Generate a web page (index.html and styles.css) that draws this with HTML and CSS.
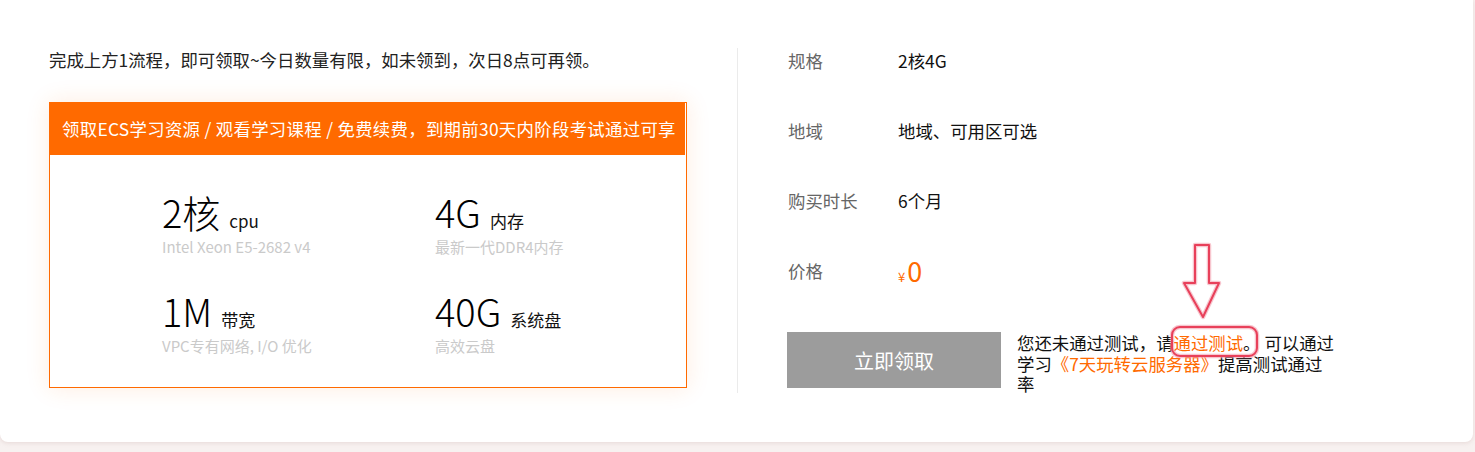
FILE: index.html
```html
<!DOCTYPE html>
<html lang="zh-CN">
<head>
<meta charset="utf-8">
<title>领取ECS</title>
<link rel="stylesheet" href="styles.css">
</head>
<body>
<div class="card">
  <div class="left">
    <p class="intro">完成上方1流程，即可领取~今日数量有限，如未领到，次日8点可再领。</p>
    <div class="box">
      <div class="box-head">领取ECS学习资源 / 观看学习课程 / 免费续费，到期前30天内阶段考试通过可享</div>
      <div class="specs">
        <div class="spec">
          <div class="spec-main"><span class="big">2核</span><span class="unit">cpu</span></div>
          <div class="spec-sub">Intel Xeon E5-2682 v4</div>
        </div>
        <div class="spec">
          <div class="spec-main"><span class="big">4G</span><span class="unit">内存</span></div>
          <div class="spec-sub">最新一代DDR4内存</div>
        </div>
        <div class="spec">
          <div class="spec-main"><span class="big">1M</span><span class="unit">带宽</span></div>
          <div class="spec-sub">VPC专有网络, I/O 优化</div>
        </div>
        <div class="spec">
          <div class="spec-main"><span class="big">40G</span><span class="unit">系统盘</span></div>
          <div class="spec-sub">高效云盘</div>
        </div>
      </div>
    </div>
  </div>
  <div class="right">
    <div class="row"><span class="label">规格</span><span class="value">2核4G</span></div>
    <div class="row"><span class="label">地域</span><span class="value">地域、可用区可选</span></div>
    <div class="row"><span class="label">购买时长</span><span class="value">6个月</span></div>
    <div class="row"><span class="label">价格</span><span class="value price"><span class="yen">¥</span><span class="num">0</span></span></div>
    <div class="action">
      <button class="btn" type="button">立即领取</button>
      <div class="msg">
        您还未通过测试，请<a class="link" href="#">通过测试</a>。 可以通过学习<a class="link" href="#">《7天玩转云服务器》</a>提高测试通过率
        <svg class="mark" width="120" height="125" viewBox="0 0 120 125" xmlns="http://www.w3.org/2000/svg">
          <g fill="none" stroke-linejoin="round" stroke-linecap="round">
            <g stroke="#f3a0ae" stroke-width="4.5" opacity="0.6">
              <path d="M38 7 L52 7 L52 45 L62 45 L46 79 L27 45 L38 45 Z" />
              <rect x="15" y="89" width="85" height="29" rx="8" ry="8" />
            </g>
            <g stroke="#e8405a" stroke-width="2">
              <path d="M38 7 L52 7 L52 45 L62 45 L46 79 L27 45 L38 45 Z" />
              <rect x="15" y="89" width="85" height="29" rx="8" ry="8" />
            </g>
          </g>
        </svg>
      </div>
    </div>
  </div>
</div>
</body>
</html>
```

FILE: styles.css
```css
* { box-sizing: border-box; }
html, body { margin: 0; padding: 0; }
body {
  background: #f7f1f0;
  font-family: "Microsoft YaHei", "Noto Sans CJK SC", "Noto Sans", sans-serif;
  color: #333;
  width: 1475px;
  height: 452px;
  overflow: hidden;
}
.card {
  width: 1473px;
  height: 442px;
  background: #fff;
  border-radius: 0 0 8px 8px;
  box-shadow: 0 1px 4px rgba(200, 170, 165, 0.35);
  display: flex;
  padding-top: 48px;
}
.left {
  width: 737px;
  padding-left: 49px;
}
.intro {
  margin: 0;
  font-size: 17.4px;
  line-height: 24px;
  color: #222;
}
.box {
  margin-top: 30px;
  width: 638px;
  height: 286px;
  border: 1px solid #ff6a00;
  box-shadow: 0 0 22px rgba(255, 120, 30, 0.14);
  background: #fff;
}
.box-head {
  height: 53px;
  margin-top: -1px;
  margin-right: 1px;
  margin-left: -1px;
  background: #ff6a00;
  color: #fff;
  font-size: 17.4px;
  letter-spacing: 0.3px;
  line-height: 53px;
  padding-left: 13px;
  white-space: nowrap;
}
.specs {
  display: grid;
  grid-template-columns: 273px 200px;
  padding-left: 112px;
  padding-top: 37px;
  row-gap: 34px;
}
.spec-main {
  height: 40px;
  line-height: 40px;
  display: flex;
  align-items: baseline;
  white-space: nowrap;
}
.big {
  font-size: 38px;
  font-weight: 300;
  color: #000;
}
.unit {
  font-size: 17px;
  color: #111;
  margin-left: 9px;
}
.spec-sub {
  margin-top: 5px;
  font-size: 15px;
  line-height: 20px;
  color: #cacaca;
  white-space: nowrap;
}
.right {
  border-left: 1px solid #ebebeb;
  height: 345px;
  padding-left: 50px;
  flex: 1;
}
.row {
  display: flex;
  height: 26px;
  line-height: 26px;
  margin-bottom: 44px;
  font-size: 17.4px;
}
.label {
  width: 110px;
  color: #666;
}
.value { color: #111; }
.price { color: #ff6a00; display: flex; align-items: baseline; }
.yen { font-size: 13px; margin-right: 2px; }
.num { font-size: 27px; }
.action {
  display: flex;
  align-items: flex-start;
  margin-top: 48px;
  margin-left: -1px;
}
.btn {
  width: 214px;
  height: 56px;
  border: 0;
  background: #9c9c9c;
  color: #fff;
  font-family: inherit;
  font-size: 20px;
  padding: 0;
  cursor: pointer;
}
.msg {
  position: relative;
  width: 320px;
  margin-left: 16px;
  margin-top: 1px;
  font-size: 17.4px;
  line-height: 20.5px;
  color: #111;
}
.link {
  color: #ff6a00;
  text-decoration: none;
}
.mark {
  position: absolute;
  left: 140px;
  top: -95px;
  pointer-events: none;
}
```
